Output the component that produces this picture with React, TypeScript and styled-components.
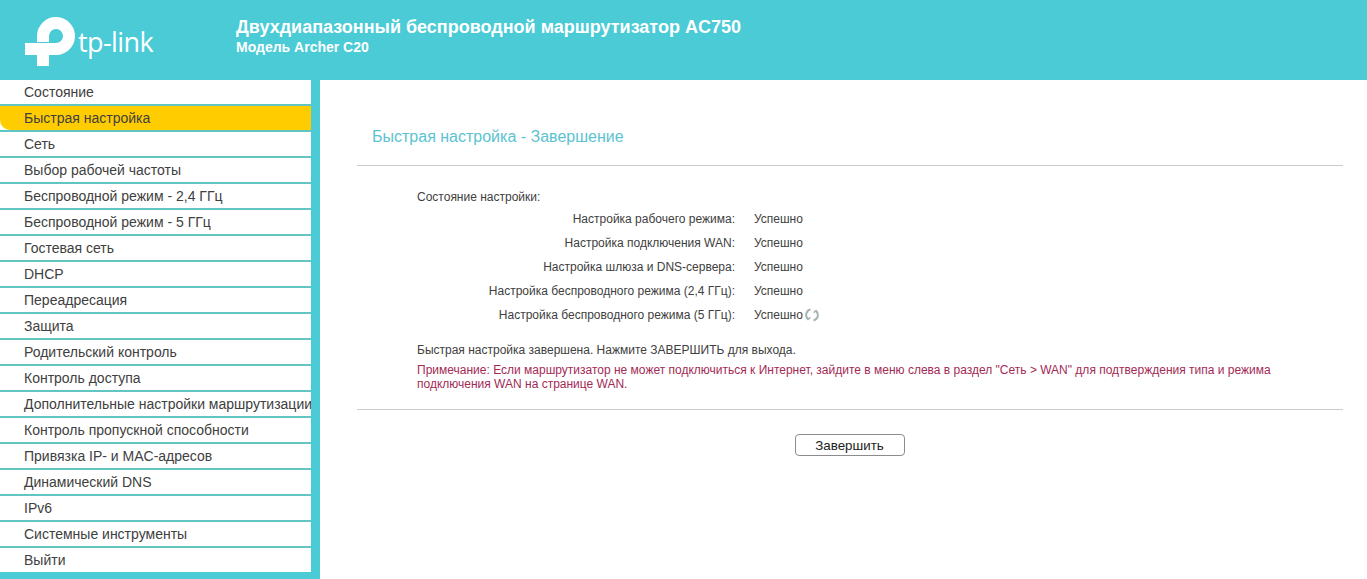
import React from "react";
import styled, { createGlobalStyle } from "styled-components";

const Global = createGlobalStyle`
  html, body { margin: 0; padding: 0; height: 100%; overflow: hidden; background: #fff; }
  body { font-family: "Liberation Sans", Arial, sans-serif; color: #404040; }
`;
const Page = styled.div`display: flex; flex-direction: column; height: 579px; overflow: hidden;`;
const Header = styled.header`
  flex: none; height: 80px; background: #4acbd6; display: flex; align-items: flex-start; box-sizing: border-box;
`;
const Brand = styled.div`
  width: 236px; flex: none; display: flex; align-items: flex-start; padding: 17px 0 0 25px; box-sizing: border-box; gap: 3px;
`;
const BrandName = styled.span`
  font-family: "Open Sans", sans-serif; font-size: 27px; line-height: 34px; color: #fff; letter-spacing: -0.6px; margin-top: 8px; font-weight: 400;
`;
const Titles = styled.div`padding-top: 17px; color: #fff; font-weight: 700;`;
const Title = styled.div`font-size: 18px; line-height: 21px;`;
const Subtitle = styled.div`font-size: 14px; line-height: 15px; margin-top: 2px;`;
const Body = styled.div`flex: 1; display: flex; min-height: 0;`;
const Sidebar = styled.nav`
  flex: none; width: 320px; box-sizing: border-box; background: #4acbd6; padding-right: 9px; height: 499px; overflow: hidden;
`;
const MenuList = styled.ul`list-style: none; margin: 0; padding: 0; background: #fff;`;
const MenuItem = styled.li`
  height: 26px; box-sizing: border-box; border-bottom: 2px solid #62c5c2;
  &:last-child { border-bottom: none; height: 24px; }
`;
const MenuLabel = styled.div<{ $active?: boolean }>`
  height: 24px; padding-left: 24px; font-size: 14px; line-height: 24px; color: #404040; white-space: nowrap; overflow: hidden;
  background: ${(p) => (p.$active ? "#ffcc00" : "#fff")};
  border-bottom-left-radius: ${(p) => (p.$active ? "10px" : "0")};
`;
const Main = styled.main`flex: 1; padding: 0 24px 0 37px; box-sizing: border-box; min-width: 0;`;
const PageTitle = styled.h1`
  margin: 0; padding: 47px 0 18px 15px; font-size: 16px; line-height: 20px; font-weight: 400; color: #5bc3d1; border-bottom: 1px solid #ccc;
`;
const Section = styled.section`padding: 24px 50px 0 60px; font-size: 12px; line-height: 14px; color: #404040;`;
const Rows = styled.div`display: flex; flex-direction: column; gap: 10px; margin-top: 8px;`;
const Row = styled.div`display: grid; grid-template-columns: 318px 1fr; column-gap: 19px;`;
const Label = styled.span`text-align: right;`;
const Value = styled.span`display: flex; align-items: center; gap: 2px;`;
const Done = styled.p`margin: 21px 0 0; line-height: 14px;`;
const Note = styled.p`margin: 6px 0 0; line-height: 14px; color: #a32a55;`;
const Footer = styled.div`margin-top: 18px; border-top: 1px solid #ccc; display: flex; justify-content: center; padding-top: 24px;`;
const FinishButton = styled.button`
  width: 110px; height: 22px; box-sizing: border-box; border: 1px solid #8c8c8c; border-radius: 4px; background: #fff;
  font-family: "Liberation Sans", Arial, sans-serif; font-size: 13.33px; color: #222; padding: 0; margin-left: -1px;
`;

const items = ["Состояние","Быстрая настройка","Сеть","Выбор рабочей частоты","Беспроводной режим - 2,4 ГГц","Беспроводной режим - 5 ГГц","Гостевая сеть","DHCP","Переадресация","Защита","Родительский контроль","Контроль доступа","Дополнительные настройки маршрутизации","Контроль пропускной способности","Привязка IP- и MAC-адресов","Динамический DNS","IPv6","Системные инструменты","Выйти"];
const rows = ["Настройка рабочего режима:","Настройка подключения WAN:","Настройка шлюза и DNS-сервера:","Настройка беспроводного режима (2,4 ГГц):","Настройка беспроводного режима (5 ГГц):"];

const Logo = () => (
  <svg width="50" height="50" viewBox="0 0 50 50" fill="none" stroke="#fff" strokeWidth="12">
    <path d="M0 32H30A13 13 0 1 0 18 19V25" />
    <path d="M18 32V49" />
  </svg>
);
const Spinner = () => (
  <svg width="14" height="14" viewBox="0 0 14 14" fill="none" stroke="#aab3b3" strokeWidth="2">
    <path d="M5.5 1.5A5.5 5.5 0 0 0 3 11" />
    <path d="M1 8.6L3 11.4L5.4 9.4" strokeWidth="1.5" />
    <path d="M8.5 12.5A5.5 5.5 0 0 0 11 3" />
    <path d="M13 5.4L11 2.6L8.6 4.6" strokeWidth="1.5" />
  </svg>
);

export default function App() {
  return (
    <Page>
      <Global />
      <Header>
        <Brand>
          <Logo />
          <BrandName>tp-link</BrandName>
        </Brand>
        <Titles>
          <Title>Двухдиапазонный беспроводной маршрутизатор AC750</Title>
          <Subtitle>Модель Archer C20</Subtitle>
        </Titles>
      </Header>
      <Body>
        <Sidebar>
          <MenuList>
            {items.map((t, i) => (
              <MenuItem key={t}><MenuLabel $active={i === 1}>{t}</MenuLabel></MenuItem>
            ))}
          </MenuList>
        </Sidebar>
        <Main>
          <PageTitle>Быстрая настройка - Завершение</PageTitle>
          <Section>
            <div>Состояние настройки:</div>
            <Rows>
              {rows.map((r, i) => (
                <Row key={r}>
                  <Label>{r}</Label>
                  <Value>Успешно{i === 4 && <Spinner />}</Value>
                </Row>
              ))}
            </Rows>
            <Done>Быстрая настройка завершена. Нажмите ЗАВЕРШИТЬ для выхода.</Done>
            <Note>Примечание: Если маршрутизатор не может подключиться к Интернет, зайдите в меню слева в раздел "Сеть &gt; WAN" для подтверждения типа и режима подключения WAN на странице WAN.</Note>
          </Section>
          <Footer><FinishButton>Завершить</FinishButton></Footer>
        </Main>
      </Body>
    </Page>
  );
}
